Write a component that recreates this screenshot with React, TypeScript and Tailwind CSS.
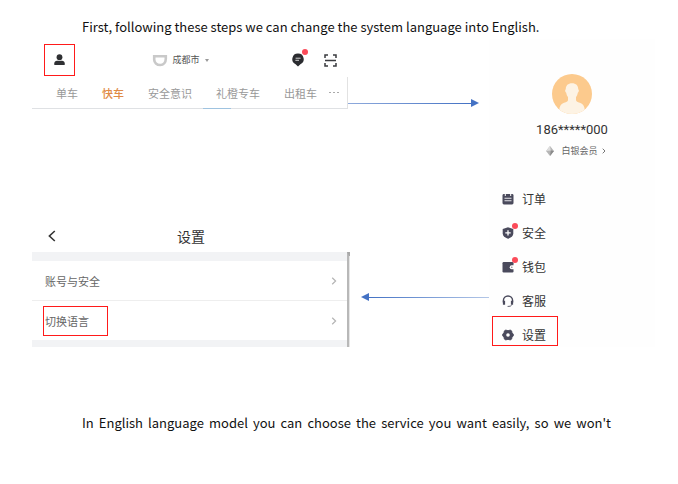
import type { ReactNode } from 'react';

const Dot = () => (
  <span className="absolute -right-1 -top-1 h-[6px] w-[6px] rounded-full bg-[#fb4b59]" />
);

const UserIcon = () => (
  <svg width="11" height="12" viewBox="0 0 11 12" fill="#2f3033">
    <circle cx="5.5" cy="3.2" r="2.9" />
    <path d="M0.3 11V9.3C0.3 7.7 1.5 6.8 3 6.8h5c1.5 0 2.7.9 2.7 2.5V11z" />
  </svg>
);

const AppLogo = () => (
  <svg width="16" height="13" viewBox="0 0 16 13" fill="none" stroke="#c9c9c9" strokeWidth="2.6">
    <path d="M2.2 6V2.2h11.6v2.6c0 3.6-2.1 6.2-5.6 6.2-3.5 0-5.9-2.3-6-5.4" />
  </svg>
);

const MessageIcon = () => (
  <svg width="12" height="14" viewBox="0 0 12 14">
    <path d="M6 .6a5.6 5.6 0 0 1 2.4 10.7L6 13.6l-2.4-2.3A5.6 5.6 0 0 1 6 .6z" fill="#2b2c30" />
    <path d="M3.6 5.2h5M3.4 7.3h3.6" stroke="#d5d5d5" strokeWidth="1" />
  </svg>
);

const ScanIcon = () => (
  <svg width="13" height="13" viewBox="0 0 13 13" fill="none" stroke="#3a3b3f" strokeWidth="1.5">
    <path d="M4 1H1v3M9 1h3v3M4 12H1V9M9 12h3V9M1 6.5h11" />
  </svg>
);

const OrderIcon = () => (
  <svg width="12" height="12" viewBox="0 0 12 12">
    <rect x=".5" y="1" width="11" height="10.4" rx="1.4" fill="#4a4a5c" />
    <path d="M3.3 0v3M8.7 0v3" stroke="#fff" strokeWidth="1" />
    <path d="M2.5 5.2h7M2.5 7.8h7" stroke="#e6e6ea" strokeWidth="1.1" />
  </svg>
);

const ShieldIcon = () => (
  <svg width="12" height="12" viewBox="0 0 12 12">
    <path d="M6 .3 11.3 2v4.6c0 2.6-2.2 4.3-5.3 5.2C2.9 10.9.7 9.2.7 6.6V2z" fill="#4a4a5c" />
    <path d="M6 3.2v5.4M3.3 5.9h5.4" stroke="#fff" strokeWidth="1.3" />
  </svg>
);

const WalletIcon = () => (
  <svg width="12" height="12" viewBox="0 0 12 12">
    <rect x=".5" y="1" width="11" height="10.4" rx="1.2" fill="#4a4a5c" />
    <path d="M12 4.2H9.7a2 2 0 0 0 0 4H12z" fill="#fff" />
    <circle cx="9.8" cy="6.2" r=".8" fill="#8b8b98" />
  </svg>
);

const HeadsetIcon = () => (
  <svg width="12" height="12" viewBox="0 0 12 12" fill="none" stroke="#4a4a5c">
    <path d="M1.4 7.5V5.6a4.6 4.6 0 0 1 9.2 0v1.9" strokeWidth="1.4" />
    <path d="M2 5.8v4M10 5.8v4" strokeWidth="2.2" />
    <path d="M9.5 10.4c-.8.8-1.9 1-3.9 1" strokeWidth=".9" />
  </svg>
);

const GearIcon = () => (
  <svg width="12" height="12" viewBox="0 0 12 12">
    <path
      d="M3.8 1.1Q6 2.4 8.2 1.1L9.6 1.9Q9.6 4.2 11.3 5.2v1.6Q9.6 7.8 9.6 10.1L8.2 10.9Q6 9.6 3.8 10.9L2.4 10.1Q2.4 7.8.7 6.8V5.2Q2.4 4.2 2.4 1.9z"
      fill="#4a4a5c"
      stroke="#4a4a5c"
      strokeWidth="1"
      strokeLinejoin="round"
    />
    <circle cx="6" cy="6" r="1.8" fill="#fff" />
  </svg>
);

const Chevron = () => (
  <svg width="6" height="8" viewBox="0 0 6 8" fill="none" stroke="#b4b4b4" strokeWidth="1.2">
    <path d="M1.2.8 4.6 4 1.2 7.2" />
  </svg>
);

const tabs = [
  { label: '单车' },
  { label: '快车', active: true },
  { label: '安全意识' },
  { label: '礼橙专车' },
  { label: '出租车' },
];

const menu: { label: string; icon: ReactNode; dot?: boolean; marked?: boolean }[] = [
  { label: '订单', icon: <OrderIcon /> },
  { label: '安全', icon: <ShieldIcon />, dot: true },
  { label: '钱包', icon: <WalletIcon />, dot: true },
  { label: '客服', icon: <HeadsetIcon /> },
  { label: '设置', icon: <GearIcon />, marked: true },
];

const HomeScreen = () => (
  <section>
    <header className="flex h-[34px] items-center justify-between pl-3 pr-[13px]">
      <button
        aria-label="Profile"
        className="flex h-8 w-[31px] items-center justify-center border border-[#ff1a1a]"
      >
        <UserIcon />
      </button>
      <button className="mr-[6px] flex items-center text-[9px] leading-4 text-[#555]">
        <AppLogo />
        <span className="ml-1">成都市</span>
        <svg className="ml-[5px]" width="4" height="3" viewBox="0 0 4 3" fill="#999">
          <path d="M0 0h4L2 3z" />
        </svg>
      </button>
      <div className="flex items-center gap-5">
        <button aria-label="Messages" className="relative">
          <MessageIcon />
          <Dot />
        </button>
        <button aria-label="Scan">
          <ScanIcon />
        </button>
      </div>
    </header>
    <div className="pr-[2px]">
      <nav className="flex h-[31px] items-center gap-6 border-r border-[#e2e2e2] pl-6 text-[11px] leading-4 text-[#999]">
        {tabs.map((tab) => (
          <a
            key={tab.label}
            href="#"
            className={tab.active ? 'shrink-0 font-medium text-[#e08a45]' : 'shrink-0'}
          >
            {tab.label}
          </a>
        ))}
        <button aria-label="More" className="-ml-3 flex gap-[2px]">
          <i className="h-px w-[2px] bg-[#aaa]" />
          <i className="h-px w-[2px] bg-[#aaa]" />
          <i className="h-px w-[2px] bg-[#aaa]" />
        </button>
      </nav>
      <div className="flex h-px bg-[#dfe1e4]">
        <span className="ml-[54%] w-[9%] bg-[#9fc3e0]" />
      </div>
    </div>
  </section>
);

const SettingsScreen = () => (
  <section className="text-[#666]">
    <header className="grid h-8 grid-cols-[1fr_auto_1fr] items-center px-4">
      <button aria-label="Back">
        <svg width="8" height="12" viewBox="0 0 8 12" fill="none" stroke="#333" strokeWidth="1.6">
          <path d="M6.8 1 1.4 6l5.4 5" />
        </svg>
      </button>
      <h2 className="text-[14px] leading-5 text-[#333]">设置</h2>
    </header>
    <div className="flex">
      <div className="min-w-0 flex-1 border-t-[9px] border-b-[7px] border-[#f2f3f5] text-[11px] leading-4">
        <a href="#" className="flex h-10 items-center justify-between border-b border-[#eee] pl-[13px] pr-[10px]">
          账号与安全
          <Chevron />
        </a>
        <a href="#" className="flex h-[39px] items-center justify-between pl-[11px] pr-[10px]">
          <span className="flex h-[30px] w-[65px] items-center border border-[#ff1a1a] pl-px">
            切换语言
          </span>
          <Chevron />
        </a>
      </div>
      <div className="w-[3px] border-l-2 border-t-4 border-l-[#b8b8b8] border-t-[#a8a8a8] bg-[#e6e6e6]" />
    </div>
  </section>
);

const AccountScreen = () => (
  <section className="flex flex-col bg-[#fefefe] pt-[35px]">
    <div className="flex flex-col items-center">
      <svg width="40" height="40" viewBox="0 0 40 40">
        <defs>
          <clipPath id="avatar">
            <circle cx="20" cy="20" r="20" />
          </clipPath>
        </defs>
        <g clipPath="url(#avatar)">
          <rect width="40" height="40" fill="#fcca8d" />
          <path
            d="M20 9.200c4.100 0 6.300 2.500 6.200 6 1 .4.800 2.900-.4 3.500-.3 1.900-.9 3.200-1.800 4.200v3.300c.3 1.700 2.500 2.100 4.500 2.900 2.600 1 4 3.200 4.300 6.900V41H7.200v-5c.3-3.700 1.700-5.900 4.300-6.900 2-.8 4.200-1.200 4.500-2.900v-3.300c-.9-1-1.500-2.300-1.800-4.200-1.200-.6-1.400-3.100-.4-3.500-.1-3.500 2.100-6 6.200-6z"
            fill="#fdf3e4"
          />
        </g>
      </svg>
      <p className="mt-[6px] font-['Roboto',sans-serif] text-[13px] leading-5 text-[#333]">
        186*****000
      </p>
      <button className="mt-[3px] flex items-center pl-2 text-[9px] leading-4 text-[#666]">
        <svg width="8" height="10" viewBox="0 0 8 10">
          <path d="M4 0 8 5 4 10 0 5z" fill="#b5b5b5" />
          <path d="M4 0 4.8 4.5 0 5z" fill="#dedede" />
          <path d="M4.8 4.5 8 5 4 10z" fill="#8a8a8a" />
        </svg>
        <span className="ml-[7px]">白银会员</span>
        <svg className="ml-1" width="4" height="6" viewBox="0 0 4 6" fill="none" stroke="#777">
          <path d="M.7.7 3 3 .7 5.3" />
        </svg>
      </button>
    </div>
    <nav className="mt-[21px] flex flex-col items-start gap-1 pl-[3px] text-[12px] leading-4 text-[#333]">
      {menu.map((item) => (
        <a
          key={item.label}
          href="#"
          className={`flex h-[30px] w-[66px] items-center border pl-[9px] pt-2 ${
            item.marked ? 'border-[#ff1a1a]' : 'border-transparent'
          }`}
        >
          <span className="relative mr-2">
            {item.icon}
            {item.dot && <Dot />}
          </span>
          {item.label}
        </a>
      ))}
    </nav>
  </section>
);

const Arrows = () => (
  <div className="flex flex-col pt-[60px]">
    <div className="-ml-[2px] mr-[10px] flex items-center">
      <span className="h-px flex-1 bg-linear-to-r from-[#8faadc] to-[#4472c4]" />
      <svg width="8" height="8" viewBox="0 0 8 8" fill="#4472c4">
        <path d="M0 0 8 4 0 8z" />
      </svg>
    </div>
    <div className="ml-[11px] mt-[186px] flex items-center">
      <svg width="8" height="8" viewBox="0 0 8 8" fill="#4472c4">
        <path d="M8 0 0 4l8 4z" />
      </svg>
      <span className="h-px flex-1 bg-linear-to-r from-[#4472c4] to-[#b4c7e7]" />
    </div>
  </div>
);

export default function App() {
  return (
    <main className="min-h-screen bg-white pb-12 pl-8 pr-[23px] pt-[15px] font-['Noto_Sans_CJK_SC',sans-serif] text-[13px] leading-6 text-[#111]">
      <p className="pl-[50px]">
        First, following these steps we can change the system language into English.
      </p>
      <div className="grid grid-cols-[318fr_139fr_166fr]">
        <div className="flex flex-col gap-[111px] pt-1">
          <HomeScreen />
          <SettingsScreen />
        </div>
        <Arrows />
        <AccountScreen />
      </div>
      <p className="mt-16 pl-[50px] pr-11 text-justify [text-align-last:justify]">
        In English language model you can choose the service you want easily, so we won't
      </p>
    </main>
  );
}
